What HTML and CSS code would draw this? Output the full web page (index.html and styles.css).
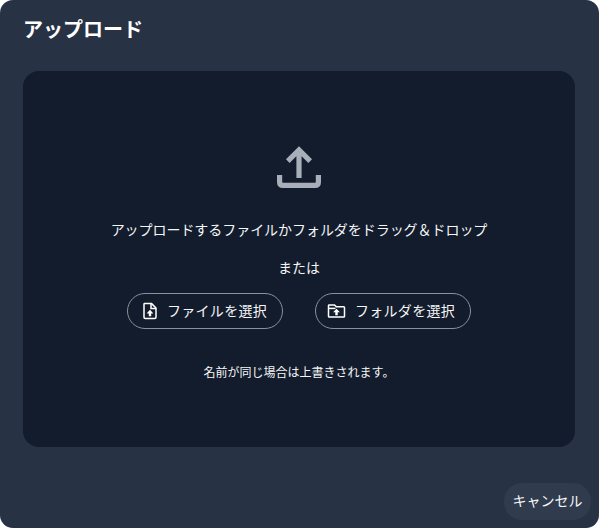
FILE: index.html
```html
<!DOCTYPE html>
<html lang="ja">
<head>
<meta charset="utf-8">
<title>アップロード</title>
<link rel="stylesheet" href="styles.css">
</head>
<body>
<div class="dialog">
  <h1 class="title">アップロード</h1>
  <div class="drop">
    <svg class="upload-icon" viewBox="0 0 44 44" width="44" height="44"><path d="M22 6 V34 M10.8 17.2 L22 6 L33.2 17.2 M2.6 31 V38 Q2.6 41.4 6 41.4 H38 Q41.4 41.4 41.4 38 V31" fill="none" stroke="#a8afba" stroke-width="5.2"/></svg>
    <p class="lead">アップロードするファイルかフォルダをドラッグ＆ドロップ</p>
    <p class="or">または</p>
    <div class="buttons">
      <button class="pick">
        <svg class="pick-icon" viewBox="0 0 18 18" width="18" height="18"><path d="M3.6 1.6 H10.6 L15 6 V15.2 Q15 16.4 13.8 16.4 H4.2 Q3 16.4 3 15.2 V2.2 Q3 1.6 3.6 1.6 Z" fill="none" stroke="#fff" stroke-width="1.5"/><path d="M10 1.6 V6.6 H15" fill="none" stroke="#fff" stroke-width="1.5"/><path d="M9 7.8 L12.4 11.4 H10.2 V14.2 H7.8 V11.4 H5.6 Z" fill="#fff"/></svg>
        <span>ファイルを選択</span>
      </button>
      <button class="pick">
        <svg class="pick-icon" viewBox="1.5 0 18 18" width="18" height="18"><path d="M1 3.6 Q1 3 1.6 3 H7 L8.8 4.8 H16.2 Q17 4.8 17 5.6 V14.2 Q17 15 16.2 15 H1.8 Q1 15 1 14.2 Z" fill="none" stroke="#fff" stroke-width="1.5"/><path d="M1.2 6.4 H8" fill="none" stroke="#fff" stroke-width="1.5"/><path d="M9 6.8 L12.4 10.2 H10.2 V13.2 H7.8 V10.2 H5.6 Z" fill="#fff"/></svg>
        <span>フォルダを選択</span>
      </button>
    </div>
    <p class="note">名前が同じ場合は上書きされます。</p>
  </div>
  <div class="actions">
    <button class="cancel">キャンセル</button>
  </div>
</div>
</body>
</html>
```
FILE: styles.css
```css
* { box-sizing: border-box; }
html, body { margin: 0; height: 100%; background: #fff; }
body { font-family: "Noto Sans CJK JP", "Noto Sans", sans-serif; color: #fff; overflow: hidden; }
.dialog {
  width: 599px;
  height: 528px;
  background: #273245;
  border-radius: 13px;
  display: flex;
  flex-direction: column;
  padding: 0 8px 8px 8px;
}
.title {
  margin: 0;
  font-size: 20px;
  font-weight: 700;
  line-height: 32px;
  padding: 13px 15px 26px;
  height: 71px;
}
.drop {
  margin: 0 16px 0 15px;
  height: 376px;
  background: #131c2c;
  border-radius: 16px;
  display: flex;
  flex-direction: column;
  align-items: center;
  padding-top: 73px;
}
.upload-icon { display: block; }
.lead, .or { margin: 0; font-size: 14px; line-height: 20px; color: #f5f6f7; }
.lead { margin-top: 31px; letter-spacing: -0.05px; }
.or { margin-top: 18px; }
.buttons { display: flex; gap: 32px; margin-top: 16px; }
.pick {
  width: 156px;
  height: 36px;
  border: 1px solid #8a919c;
  border-radius: 18px;
  background: transparent;
  color: #f5f6f7;
  font: inherit;
  font-size: 14px;
  letter-spacing: 0.3px;
  display: flex;
  align-items: center;
  justify-content: center;
  gap: 8px;
  padding: 0 2px 2px 0;
}
.pick-icon { display: block; margin-top: 2px; overflow: visible; }
.note { margin: 33px 0 0; font-size: 12px; line-height: 20px; color: #f5f6f7; }
.actions { display: flex; justify-content: flex-end; margin-top: auto; }
.cancel {
  width: 87px;
  height: 37px;
  border: 0;
  border-radius: 18px;
  background: #303b4d;
  color: #f5f6f7;
  font: inherit;
  font-size: 14px;
  padding: 0 0 3px;
}
```
